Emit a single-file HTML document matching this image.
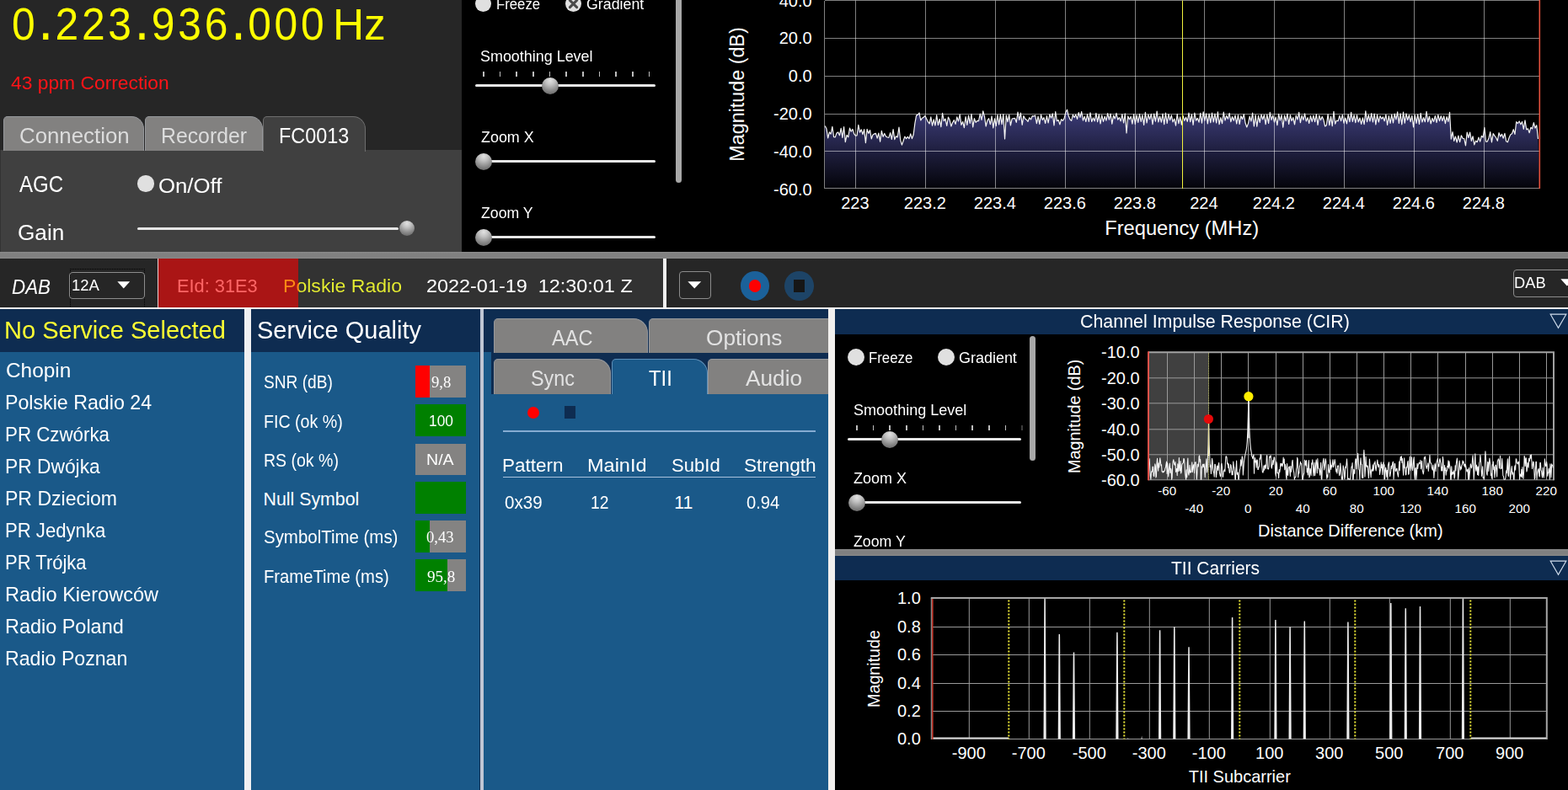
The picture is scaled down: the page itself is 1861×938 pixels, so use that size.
<!DOCTYPE html>
<html lang="en"><head><meta charset="utf-8"><title>DAB Receiver</title>
<style>
html,body{margin:0;padding:0;background:#000;}
body{width:1861px;height:938px;overflow:hidden;font-family:"Liberation Sans",sans-serif;}
#app{position:relative;width:1861px;height:938px;overflow:hidden;background:#000;}
#app div,#app svg{position:absolute;box-sizing:border-box;}
.t{white-space:pre;line-height:1;transform-origin:0 0;}
.thumb{border-radius:50%;background:radial-gradient(circle at 50% 18%,#e2e2e2 0%,#c2c2c2 28%,#8c8c8c 62%,#585858 100%);}
.radio{border-radius:50%;background:#e0e0e0;}
.track{background:#e6e6e6;height:3px;border-radius:1.5px;}
.tab{background:#828180;border:1px solid #96989c;border-bottom:none;border-radius:5px 15px 0 0;}

</style></head>
<body>
<div id="app">
<div style="left:0px;top:0px;width:548px;height:299px;background:#262626;"></div>
<div style="left:0px;top:178px;width:548px;height:121px;background:#404040;border-left:1px solid #333;"></div>
<div class="t" style="left:14.34px;top:0.73px;font-size:54px;color:#ffff00;letter-spacing:4.03px;transform:scaleX(0.922);">0<span style="font-size:70px;line-height:0;margin-left:-0.18px;letter-spacing:2.54px;">.</span>223<span style="font-size:70px;line-height:0;margin-left:-0.18px;letter-spacing:2.54px;">.</span>936<span style="font-size:70px;line-height:0;margin-left:-0.18px;letter-spacing:2.54px;">.</span>000</div>
<div class="t" style="left:394.88px;top:3.01px;font-size:52.49px;color:#ffff00;transform:scaleX(0.9793);">Hz</div>
<div class="t" style="left:12.84px;top:88.42px;font-size:22.48px;color:#ff1418;transform:scaleX(1.0158);">43 ppm Correction</div>
<div class="tab" style="left:4px;top:138px;width:167px;height:40.5px;"></div>
<div class="tab" style="left:172px;top:138px;width:139.5px;height:40.5px;"></div>
<div class="tab" style="left:312px;top:138px;width:122px;height:42px;background:#404040;border-color:#6e6e6e;"></div>
<div class="t" style="left:22.79px;top:148.41px;font-size:26.03px;color:#dcdcdc;transform:scaleX(0.9922);">Connection</div>
<div class="t" style="left:190.56px;top:148.41px;font-size:26.03px;color:#dcdcdc;transform:scaleX(0.9533);">Recorder</div>
<div class="t" style="left:330.77px;top:148.41px;font-size:26.03px;color:#ffffff;transform:scaleX(0.8982);">FC0013</div>
<div class="t" style="left:22.60px;top:205.33px;font-size:27.31px;color:#fff;transform:scaleX(0.8809);">AGC</div>
<div class="radio" style="left:163.2px;top:208px;width:19.5px;height:19.5px;"></div>
<div class="t" style="left:187.79px;top:208.61px;font-size:24.61px;color:#fff;transform:scaleX(1.0469);">On/Off</div>
<div class="t" style="left:21.37px;top:263.05px;font-size:26.46px;color:#fff;transform:scaleX(0.9894);">Gain</div>
<div class="track" style="left:163px;top:270px;width:310px;"></div>
<div class="thumb" style="left:473.7px;top:262.3px;width:18px;height:18px;"></div>
<div class="radio" style="left:564px;top:-5px;width:19px;height:19px;"></div>
<div class="t" style="left:588.59px;top:-4.21px;font-size:18.49px;color:#fff;transform:scaleX(0.9051);">Freeze</div>
<div class="radio" style="left:670.5px;top:-5px;width:19px;height:19px;"></div>
<svg style="left:670.5px;top:-5px;" width="19" height="19" viewBox="0 0 19 19"><path d="M5.4 5.4 L13.6 13.6 M13.6 5.4 L5.4 13.6" stroke="#4a4a4a" stroke-width="3" stroke-linecap="round" fill="none"/></svg>
<div class="t" style="left:695.57px;top:-4.21px;font-size:18.49px;color:#fff;transform:scaleX(0.9627);">Gradient</div>
<div style="left:802px;top:-6px;width:7px;height:222.5px;background:#a8a8a8;border-radius:3.5px;"></div>
<div class="t" style="left:570.04px;top:57.55px;font-size:18.78px;color:#fff;transform:scaleX(0.9553);">Smoothing Level</div>
<div style="left:573.0px;top:85.3px;width:1.6px;height:5.8px;background:#bdbdbd;"></div>
<div style="left:592.67px;top:85.3px;width:1.6px;height:5.8px;background:#bdbdbd;"></div>
<div style="left:612.34px;top:85.3px;width:1.6px;height:5.8px;background:#bdbdbd;"></div>
<div style="left:632.01px;top:85.3px;width:1.6px;height:5.8px;background:#bdbdbd;"></div>
<div style="left:651.68px;top:85.3px;width:1.6px;height:5.8px;background:#bdbdbd;"></div>
<div style="left:671.35px;top:85.3px;width:1.6px;height:5.8px;background:#bdbdbd;"></div>
<div style="left:691.02px;top:85.3px;width:1.6px;height:5.8px;background:#bdbdbd;"></div>
<div style="left:710.69px;top:85.3px;width:1.6px;height:5.8px;background:#bdbdbd;"></div>
<div style="left:730.36px;top:85.3px;width:1.6px;height:5.8px;background:#bdbdbd;"></div>
<div style="left:750.03px;top:85.3px;width:1.6px;height:5.8px;background:#bdbdbd;"></div>
<div style="left:769.7px;top:85.3px;width:1.6px;height:5.8px;background:#bdbdbd;"></div>
<div class="track" style="left:564px;top:100px;width:214px;"></div>
<div class="thumb" style="left:642.8px;top:91.8px;width:20px;height:20px;"></div>
<div class="t" style="left:570.94px;top:153.55px;font-size:18.78px;color:#fff;transform:scaleX(0.9544);">Zoom X</div>
<div class="track" style="left:575px;top:190px;width:203px;"></div>
<div class="thumb" style="left:564.4px;top:181.8px;width:20px;height:20px;"></div>
<div class="t" style="left:570.95px;top:243.55px;font-size:18.78px;color:#fff;transform:scaleX(0.9421);">Zoom Y</div>
<div class="track" style="left:575px;top:280px;width:203px;"></div>
<div class="thumb" style="left:564.4px;top:271.7px;width:20px;height:20px;"></div>
<svg style="left:840px;top:0px;" width="1021" height="299" viewBox="840 0 1021 299" font-family='"Liberation Sans",sans-serif' fill="#fff"><defs><linearGradient id="sg" x1="0" y1="128" x2="0" y2="223.5" gradientUnits="userSpaceOnUse"><stop offset="0" stop-color="#3e3e7c"/><stop offset="1" stop-color="#04040a"/></linearGradient></defs><polygon points="979.0,223.5 979.25,149.5 980.97,153.0 982.69,163.9 984.41,156.9 986.13,159.1 987.85,150.4 989.57,162.7 991.29,162.9 993.01,158.0 994.73,156.9 996.45,160.8 998.17,152.3 999.89,163.3 1001.61,150.7 1003.33,168.6 1005.05,160.4 1006.77,162.8 1008.49,152.1 1010.21,156.2 1011.93,153.4 1013.65,158.9 1015.37,161.1 1017.09,161.0 1018.81,148.3 1020.53,157.2 1022.25,153.9 1023.97,159.7 1025.69,153.7 1027.41,169.6 1029.13,153.4 1030.85,158.4 1032.57,154.6 1034.29,164.8 1036.01,159.9 1037.73,158.9 1039.45,158.3 1041.17,164.2 1042.89,158.0 1044.61,168.1 1046.33,155.4 1048.05,162.4 1049.77,158.4 1051.49,162.0 1053.21,163.0 1054.93,163.4 1056.65,157.7 1058.37,165.5 1060.09,153.5 1061.81,165.6 1063.53,161.7 1065.25,162.9 1066.97,151.0 1068.69,166.4 1070.41,172.1 1072.13,167.3 1073.85,162.1 1075.57,164.7 1077.29,162.3 1079.01,164.6 1080.73,158.9 1082.45,164.6 1084.17,159.8 1085.89,146.4 1087.61,136.9 1089.33,136.4 1091.05,134.0 1092.77,142.8 1094.49,140.2 1096.21,139.4 1097.93,137.4 1099.65,141.0 1101.37,144.4 1103.09,146.9 1104.81,138.9 1106.53,149.2 1108.25,141.8 1109.97,149.0 1111.69,136.7 1113.41,148.5 1115.13,141.3 1116.85,150.7 1118.57,134.4 1120.29,143.7 1122.01,141.1 1123.73,149.3 1125.45,139.0 1127.17,142.6 1128.89,150.0 1130.61,145.5 1132.33,142.6 1134.05,147.4 1135.77,138.9 1137.49,144.0 1139.21,135.9 1140.93,148.3 1142.65,144.4 1144.37,151.7 1146.09,138.5 1147.81,148.4 1149.53,137.1 1151.25,146.5 1152.97,135.4 1154.69,151.0 1156.41,140.7 1158.13,145.4 1159.85,143.4 1161.57,143.7 1163.29,135.2 1165.01,142.3 1166.73,131.9 1168.45,138.1 1170.17,150.0 1171.89,143.0 1173.61,140.7 1175.33,147.7 1177.05,137.9 1178.77,151.9 1180.49,140.9 1182.21,149.7 1183.93,136.4 1185.65,147.9 1187.37,135.8 1189.09,147.7 1190.81,135.5 1192.53,165.0 1194.25,136.9 1195.97,144.7 1197.69,136.4 1199.41,148.9 1201.13,141.0 1202.85,140.7 1204.57,140.4 1206.29,145.3 1208.01,133.2 1209.73,142.3 1211.45,134.2 1213.17,148.3 1214.89,137.6 1216.61,141.1 1218.33,142.2 1220.05,144.3 1221.77,139.7 1223.49,141.9 1225.21,137.7 1226.93,138.1 1228.65,137.0 1230.37,146.7 1232.09,138.2 1233.81,147.4 1235.53,136.1 1237.25,142.3 1238.97,139.7 1240.69,146.5 1242.41,137.7 1244.13,146.0 1245.85,135.9 1247.57,140.1 1249.29,134.9 1251.01,148.9 1252.73,132.7 1254.45,143.7 1256.17,142.5 1257.89,147.9 1259.61,141.6 1261.33,143.4 1263.05,140.6 1264.77,133.6 1266.49,130.2 1268.21,137.5 1269.93,141.7 1271.65,143.4 1273.37,136.2 1275.09,139.5 1276.81,136.1 1278.53,141.4 1280.25,133.6 1281.97,139.4 1283.69,132.5 1285.41,143.0 1287.13,138.2 1288.85,144.5 1290.57,135.7 1292.29,144.4 1294.01,133.8 1295.73,144.5 1297.45,139.9 1299.17,143.8 1300.89,134.4 1302.61,144.7 1304.33,135.8 1306.05,146.9 1307.77,136.9 1309.49,144.3 1311.21,138.1 1312.93,143.1 1314.65,134.5 1316.37,142.1 1318.09,135.0 1319.81,147.1 1321.53,137.1 1323.25,140.9 1324.97,134.4 1326.69,142.1 1328.41,139.6 1330.13,143.8 1331.85,135.6 1333.57,146.0 1335.29,134.9 1337.01,158.0 1338.73,137.9 1340.45,141.8 1342.17,138.3 1343.89,147.2 1345.61,135.6 1347.33,147.4 1349.05,136.7 1350.77,145.3 1352.49,135.4 1354.21,144.3 1355.93,136.6 1357.65,148.4 1359.37,133.3 1361.09,145.8 1362.81,136.0 1364.53,141.6 1366.25,135.3 1367.97,147.6 1369.69,135.1 1371.41,144.2 1373.13,132.0 1374.85,144.9 1376.57,138.0 1378.29,145.2 1380.01,135.1 1381.73,147.7 1383.45,134.0 1385.17,146.5 1386.89,135.5 1388.61,142.6 1390.33,136.8 1392.05,144.8 1393.77,141.0 1395.49,149.1 1397.21,135.3 1398.93,146.6 1400.65,138.8 1402.37,148.2 1404.09,137.4 1405.81,143.3 1407.53,139.2 1409.25,144.3 1410.97,134.2 1412.69,144.7 1414.41,135.9 1416.13,148.3 1417.85,134.0 1419.57,143.1 1421.29,140.3 1423.01,145.1 1424.73,134.4 1426.45,146.1 1428.17,132.9 1429.89,143.2 1431.61,134.8 1433.33,146.8 1435.05,135.0 1436.77,145.7 1438.49,134.2 1440.21,144.8 1441.93,135.2 1443.65,145.9 1445.37,132.8 1447.09,147.6 1448.81,139.6 1450.53,146.7 1452.25,133.2 1453.97,143.0 1455.69,137.4 1457.41,141.2 1459.13,134.4 1460.85,144.6 1462.57,138.5 1464.29,143.2 1466.01,136.9 1467.73,146.9 1469.45,136.5 1471.17,147.4 1472.89,137.7 1474.61,141.5 1476.33,135.6 1478.05,146.0 1479.77,151.0 1481.49,146.6 1483.21,138.1 1484.93,144.0 1486.65,134.2 1488.37,150.0 1490.09,136.5 1491.81,150.2 1493.53,137.4 1495.25,145.3 1496.97,136.0 1498.69,141.8 1500.41,136.5 1502.13,147.7 1503.85,136.2 1505.57,146.3 1507.29,133.3 1509.01,142.3 1510.73,137.0 1512.45,145.1 1514.17,139.0 1515.89,148.6 1517.61,135.4 1519.33,143.0 1521.05,136.7 1522.77,151.2 1524.49,137.0 1526.21,143.7 1527.93,135.0 1529.65,147.3 1531.37,136.6 1533.09,143.5 1534.81,139.6 1536.53,147.9 1538.25,137.0 1539.97,142.0 1541.69,133.4 1543.41,145.6 1545.13,137.1 1546.85,142.4 1548.57,134.8 1550.29,144.0 1552.01,139.6 1553.73,146.5 1555.45,137.7 1557.17,144.3 1558.89,137.1 1560.61,144.6 1562.33,135.6 1564.05,148.5 1565.77,137.1 1567.49,142.6 1569.21,138.4 1570.93,142.3 1572.65,150.0 1574.37,148.7 1576.09,135.6 1577.81,148.7 1579.53,138.4 1581.25,149.6 1582.97,132.4 1584.69,147.1 1586.41,143.0 1588.13,143.7 1589.85,137.4 1591.57,143.7 1593.29,136.4 1595.01,146.2 1596.73,140.0 1598.45,146.8 1600.17,135.9 1601.89,144.7 1603.61,133.4 1605.33,144.4 1607.05,136.7 1608.77,145.6 1610.49,136.5 1612.21,144.8 1613.93,140.0 1615.65,147.4 1617.37,139.9 1619.09,147.7 1620.81,131.9 1622.53,144.7 1624.25,136.6 1625.97,144.0 1627.69,134.6 1629.41,145.0 1631.13,135.0 1632.85,147.9 1634.57,136.2 1636.29,145.0 1638.01,137.7 1639.73,141.1 1641.45,139.0 1643.17,143.7 1644.89,136.0 1646.61,148.5 1648.33,137.6 1650.05,146.4 1651.77,136.0 1653.49,145.8 1655.21,135.1 1656.93,141.8 1658.65,132.8 1660.37,146.3 1662.09,134.9 1663.81,147.8 1665.53,133.0 1667.25,146.2 1668.97,134.9 1670.69,142.5 1672.41,136.6 1674.13,144.6 1675.85,137.3 1677.57,150.9 1679.29,136.7 1681.01,146.3 1682.73,135.9 1684.45,147.5 1686.17,134.4 1687.89,145.0 1689.61,139.6 1691.33,144.7 1693.05,132.4 1694.77,144.7 1696.49,138.1 1698.21,146.8 1699.93,140.3 1701.65,144.4 1703.37,137.5 1705.09,145.5 1706.81,136.3 1708.53,143.7 1710.25,137.7 1711.97,143.5 1713.69,137.9 1715.41,146.6 1717.13,138.7 1718.85,144.3 1720.57,133.3 1722.29,165.2 1724.01,156.5 1725.73,167.4 1727.45,162.0 1729.17,169.0 1730.89,161.1 1732.61,168.7 1734.33,160.8 1736.05,164.3 1737.77,164.5 1739.49,172.9 1741.21,157.2 1742.93,163.5 1744.65,157.1 1746.37,167.3 1748.09,161.8 1749.81,171.9 1751.53,167.2 1753.25,168.7 1754.97,163.1 1756.69,168.1 1758.41,161.4 1760.13,163.1 1761.85,151.4 1763.57,168.1 1765.29,168.1 1767.01,164.0 1768.73,156.7 1770.45,168.8 1772.17,158.6 1773.89,161.2 1775.61,163.5 1777.33,167.3 1779.05,157.7 1780.77,162.1 1782.49,159.3 1784.21,164.2 1785.93,158.3 1787.65,167.8 1789.37,168.8 1791.09,163.6 1792.81,159.8 1794.53,158.8 1796.25,153.6 1797.97,159.4 1799.69,144.7 1801.41,146.5 1803.13,144.0 1804.85,147.8 1806.57,144.5 1808.29,153.4 1810.01,142.8 1811.73,153.8 1813.45,152.9 1815.17,157.7 1816.89,151.3 1818.61,152.9 1820.33,145.6 1822.05,152.1 1823.77,148.7 1825.49,165.0 1827.0,223.5" fill="url(#sg)"/><path d="M1015.5 0.5V223.5 M1098.5 0.5V223.5 M1181.5 0.5V223.5 M1264.5 0.5V223.5 M1347.5 0.5V223.5 M1429.5 0.5V223.5 M1512.5 0.5V223.5 M1595.5 0.5V223.5 M1678.5 0.5V223.5 M1761.5 0.5V223.5 M979.0 0.5H1827.0 M979.0 45.5H1827.0 M979.0 90.5H1827.0 M979.0 135.5H1827.0 M979.0 179.5H1827.0 M979.0 223.5H1827.0 M978.5 1V224.0" stroke="#fff" stroke-opacity="0.5" stroke-width="1" fill="none"/><polyline points="979.25,149.5 980.97,153.0 982.69,163.9 984.41,156.9 986.13,159.1 987.85,150.4 989.57,162.7 991.29,162.9 993.01,158.0 994.73,156.9 996.45,160.8 998.17,152.3 999.89,163.3 1001.61,150.7 1003.33,168.6 1005.05,160.4 1006.77,162.8 1008.49,152.1 1010.21,156.2 1011.93,153.4 1013.65,158.9 1015.37,161.1 1017.09,161.0 1018.81,148.3 1020.53,157.2 1022.25,153.9 1023.97,159.7 1025.69,153.7 1027.41,169.6 1029.13,153.4 1030.85,158.4 1032.57,154.6 1034.29,164.8 1036.01,159.9 1037.73,158.9 1039.45,158.3 1041.17,164.2 1042.89,158.0 1044.61,168.1 1046.33,155.4 1048.05,162.4 1049.77,158.4 1051.49,162.0 1053.21,163.0 1054.93,163.4 1056.65,157.7 1058.37,165.5 1060.09,153.5 1061.81,165.6 1063.53,161.7 1065.25,162.9 1066.97,151.0 1068.69,166.4 1070.41,172.1 1072.13,167.3 1073.85,162.1 1075.57,164.7 1077.29,162.3 1079.01,164.6 1080.73,158.9 1082.45,164.6 1084.17,159.8 1085.89,146.4 1087.61,136.9 1089.33,136.4 1091.05,134.0 1092.77,142.8 1094.49,140.2 1096.21,139.4 1097.93,137.4 1099.65,141.0 1101.37,144.4 1103.09,146.9 1104.81,138.9 1106.53,149.2 1108.25,141.8 1109.97,149.0 1111.69,136.7 1113.41,148.5 1115.13,141.3 1116.85,150.7 1118.57,134.4 1120.29,143.7 1122.01,141.1 1123.73,149.3 1125.45,139.0 1127.17,142.6 1128.89,150.0 1130.61,145.5 1132.33,142.6 1134.05,147.4 1135.77,138.9 1137.49,144.0 1139.21,135.9 1140.93,148.3 1142.65,144.4 1144.37,151.7 1146.09,138.5 1147.81,148.4 1149.53,137.1 1151.25,146.5 1152.97,135.4 1154.69,151.0 1156.41,140.7 1158.13,145.4 1159.85,143.4 1161.57,143.7 1163.29,135.2 1165.01,142.3 1166.73,131.9 1168.45,138.1 1170.17,150.0 1171.89,143.0 1173.61,140.7 1175.33,147.7 1177.05,137.9 1178.77,151.9 1180.49,140.9 1182.21,149.7 1183.93,136.4 1185.65,147.9 1187.37,135.8 1189.09,147.7 1190.81,135.5 1192.53,165.0 1194.25,136.9 1195.97,144.7 1197.69,136.4 1199.41,148.9 1201.13,141.0 1202.85,140.7 1204.57,140.4 1206.29,145.3 1208.01,133.2 1209.73,142.3 1211.45,134.2 1213.17,148.3 1214.89,137.6 1216.61,141.1 1218.33,142.2 1220.05,144.3 1221.77,139.7 1223.49,141.9 1225.21,137.7 1226.93,138.1 1228.65,137.0 1230.37,146.7 1232.09,138.2 1233.81,147.4 1235.53,136.1 1237.25,142.3 1238.97,139.7 1240.69,146.5 1242.41,137.7 1244.13,146.0 1245.85,135.9 1247.57,140.1 1249.29,134.9 1251.01,148.9 1252.73,132.7 1254.45,143.7 1256.17,142.5 1257.89,147.9 1259.61,141.6 1261.33,143.4 1263.05,140.6 1264.77,133.6 1266.49,130.2 1268.21,137.5 1269.93,141.7 1271.65,143.4 1273.37,136.2 1275.09,139.5 1276.81,136.1 1278.53,141.4 1280.25,133.6 1281.97,139.4 1283.69,132.5 1285.41,143.0 1287.13,138.2 1288.85,144.5 1290.57,135.7 1292.29,144.4 1294.01,133.8 1295.73,144.5 1297.45,139.9 1299.17,143.8 1300.89,134.4 1302.61,144.7 1304.33,135.8 1306.05,146.9 1307.77,136.9 1309.49,144.3 1311.21,138.1 1312.93,143.1 1314.65,134.5 1316.37,142.1 1318.09,135.0 1319.81,147.1 1321.53,137.1 1323.25,140.9 1324.97,134.4 1326.69,142.1 1328.41,139.6 1330.13,143.8 1331.85,135.6 1333.57,146.0 1335.29,134.9 1337.01,158.0 1338.73,137.9 1340.45,141.8 1342.17,138.3 1343.89,147.2 1345.61,135.6 1347.33,147.4 1349.05,136.7 1350.77,145.3 1352.49,135.4 1354.21,144.3 1355.93,136.6 1357.65,148.4 1359.37,133.3 1361.09,145.8 1362.81,136.0 1364.53,141.6 1366.25,135.3 1367.97,147.6 1369.69,135.1 1371.41,144.2 1373.13,132.0 1374.85,144.9 1376.57,138.0 1378.29,145.2 1380.01,135.1 1381.73,147.7 1383.45,134.0 1385.17,146.5 1386.89,135.5 1388.61,142.6 1390.33,136.8 1392.05,144.8 1393.77,141.0 1395.49,149.1 1397.21,135.3 1398.93,146.6 1400.65,138.8 1402.37,148.2 1404.09,137.4 1405.81,143.3 1407.53,139.2 1409.25,144.3 1410.97,134.2 1412.69,144.7 1414.41,135.9 1416.13,148.3 1417.85,134.0 1419.57,143.1 1421.29,140.3 1423.01,145.1 1424.73,134.4 1426.45,146.1 1428.17,132.9 1429.89,143.2 1431.61,134.8 1433.33,146.8 1435.05,135.0 1436.77,145.7 1438.49,134.2 1440.21,144.8 1441.93,135.2 1443.65,145.9 1445.37,132.8 1447.09,147.6 1448.81,139.6 1450.53,146.7 1452.25,133.2 1453.97,143.0 1455.69,137.4 1457.41,141.2 1459.13,134.4 1460.85,144.6 1462.57,138.5 1464.29,143.2 1466.01,136.9 1467.73,146.9 1469.45,136.5 1471.17,147.4 1472.89,137.7 1474.61,141.5 1476.33,135.6 1478.05,146.0 1479.77,151.0 1481.49,146.6 1483.21,138.1 1484.93,144.0 1486.65,134.2 1488.37,150.0 1490.09,136.5 1491.81,150.2 1493.53,137.4 1495.25,145.3 1496.97,136.0 1498.69,141.8 1500.41,136.5 1502.13,147.7 1503.85,136.2 1505.57,146.3 1507.29,133.3 1509.01,142.3 1510.73,137.0 1512.45,145.1 1514.17,139.0 1515.89,148.6 1517.61,135.4 1519.33,143.0 1521.05,136.7 1522.77,151.2 1524.49,137.0 1526.21,143.7 1527.93,135.0 1529.65,147.3 1531.37,136.6 1533.09,143.5 1534.81,139.6 1536.53,147.9 1538.25,137.0 1539.97,142.0 1541.69,133.4 1543.41,145.6 1545.13,137.1 1546.85,142.4 1548.57,134.8 1550.29,144.0 1552.01,139.6 1553.73,146.5 1555.45,137.7 1557.17,144.3 1558.89,137.1 1560.61,144.6 1562.33,135.6 1564.05,148.5 1565.77,137.1 1567.49,142.6 1569.21,138.4 1570.93,142.3 1572.65,150.0 1574.37,148.7 1576.09,135.6 1577.81,148.7 1579.53,138.4 1581.25,149.6 1582.97,132.4 1584.69,147.1 1586.41,143.0 1588.13,143.7 1589.85,137.4 1591.57,143.7 1593.29,136.4 1595.01,146.2 1596.73,140.0 1598.45,146.8 1600.17,135.9 1601.89,144.7 1603.61,133.4 1605.33,144.4 1607.05,136.7 1608.77,145.6 1610.49,136.5 1612.21,144.8 1613.93,140.0 1615.65,147.4 1617.37,139.9 1619.09,147.7 1620.81,131.9 1622.53,144.7 1624.25,136.6 1625.97,144.0 1627.69,134.6 1629.41,145.0 1631.13,135.0 1632.85,147.9 1634.57,136.2 1636.29,145.0 1638.01,137.7 1639.73,141.1 1641.45,139.0 1643.17,143.7 1644.89,136.0 1646.61,148.5 1648.33,137.6 1650.05,146.4 1651.77,136.0 1653.49,145.8 1655.21,135.1 1656.93,141.8 1658.65,132.8 1660.37,146.3 1662.09,134.9 1663.81,147.8 1665.53,133.0 1667.25,146.2 1668.97,134.9 1670.69,142.5 1672.41,136.6 1674.13,144.6 1675.85,137.3 1677.57,150.9 1679.29,136.7 1681.01,146.3 1682.73,135.9 1684.45,147.5 1686.17,134.4 1687.89,145.0 1689.61,139.6 1691.33,144.7 1693.05,132.4 1694.77,144.7 1696.49,138.1 1698.21,146.8 1699.93,140.3 1701.65,144.4 1703.37,137.5 1705.09,145.5 1706.81,136.3 1708.53,143.7 1710.25,137.7 1711.97,143.5 1713.69,137.9 1715.41,146.6 1717.13,138.7 1718.85,144.3 1720.57,133.3 1722.29,165.2 1724.01,156.5 1725.73,167.4 1727.45,162.0 1729.17,169.0 1730.89,161.1 1732.61,168.7 1734.33,160.8 1736.05,164.3 1737.77,164.5 1739.49,172.9 1741.21,157.2 1742.93,163.5 1744.65,157.1 1746.37,167.3 1748.09,161.8 1749.81,171.9 1751.53,167.2 1753.25,168.7 1754.97,163.1 1756.69,168.1 1758.41,161.4 1760.13,163.1 1761.85,151.4 1763.57,168.1 1765.29,168.1 1767.01,164.0 1768.73,156.7 1770.45,168.8 1772.17,158.6 1773.89,161.2 1775.61,163.5 1777.33,167.3 1779.05,157.7 1780.77,162.1 1782.49,159.3 1784.21,164.2 1785.93,158.3 1787.65,167.8 1789.37,168.8 1791.09,163.6 1792.81,159.8 1794.53,158.8 1796.25,153.6 1797.97,159.4 1799.69,144.7 1801.41,146.5 1803.13,144.0 1804.85,147.8 1806.57,144.5 1808.29,153.4 1810.01,142.8 1811.73,153.8 1813.45,152.9 1815.17,157.7 1816.89,151.3 1818.61,152.9 1820.33,145.6 1822.05,152.1 1823.77,148.7 1825.49,165.0" fill="none" stroke="#f4f4f4" stroke-width="1.2" stroke-linejoin="round"/><path d="M1403.5 0.5V224.0" stroke="#f2f23c" stroke-width="1"/><path d="M1827.3 0V224.0" stroke="#e2503c" stroke-width="1.6"/><text x="963.6" y="7.9" font-size="20" text-anchor="end">40.0</text><text x="963.6" y="52.2" font-size="20" text-anchor="end">20.0</text><text x="963.6" y="97.1" font-size="20" text-anchor="end">0.0</text><text x="963.6" y="142.1" font-size="20" text-anchor="end">-20.0</text><text x="963.6" y="186.7" font-size="20" text-anchor="end">-40.0</text><text x="963.6" y="231.7" font-size="20" text-anchor="end">-60.0</text><text x="1014.9" y="247.6" font-size="20" text-anchor="middle">223</text><text x="1097.9" y="247.6" font-size="20" text-anchor="middle">223.2</text><text x="1180.9" y="247.6" font-size="20" text-anchor="middle">223.4</text><text x="1263.9" y="247.6" font-size="20" text-anchor="middle">223.6</text><text x="1346.9" y="247.6" font-size="20" text-anchor="middle">223.8</text><text x="1428.9" y="247.6" font-size="20" text-anchor="middle">224</text><text x="1511.9" y="247.6" font-size="20" text-anchor="middle">224.2</text><text x="1594.9" y="247.6" font-size="20" text-anchor="middle">224.4</text><text x="1677.9" y="247.6" font-size="20" text-anchor="middle">224.6</text><text x="1760.9" y="247.6" font-size="20" text-anchor="middle">224.8</text><text x="1402.7" y="278.6" font-size="23.7" text-anchor="middle">Frequency (MHz)</text><text transform="translate(882.6 112) rotate(-90)" font-size="23.3" text-anchor="middle">Magnitude (dB)</text></svg>
<div style="left:0px;top:299px;width:1861px;height:8px;background:linear-gradient(#8a8a8a,#808080 30%,#808080 70%,#888);"></div>
<div style="left:0px;top:307px;width:1861px;height:58px;background:#262626;"></div>
<div style="left:354px;top:307px;width:433px;height:58px;background:#323232;"></div>
<div style="left:187px;top:307px;width:1px;height:58px;background:#ead2d2;"></div>
<div style="left:188px;top:307px;width:166px;height:58px;background:#aa1515;"></div>
<div class="t" style="left:13.55px;top:330.46px;font-size:23.61px;color:#fff;font-style:italic;transform:scaleX(0.9463);">DAB</div>
<div style="left:82.5px;top:319px;width:89.5px;height:46.5px;background:transparent;border:1px dotted #000;"></div>
<div style="left:82px;top:322.5px;width:90px;height:32px;background:transparent;border:1px solid #8c8c8c;border-radius:4px;"></div>
<div class="t" style="left:85.44px;top:329.68px;font-size:18.63px;color:#fff;transform:scaleX(0.9946);">12A</div>
<svg style="left:139px;top:333.6px;" width="16" height="9" viewBox="0 0 16 9"><path d="M0.3 0.3H15.2L7.75 8.6Z" fill="#fff"/></svg>
<div class="t" style="left:209.80px;top:328.18px;font-size:22.76px;color:#ff6666;transform:scaleX(0.9582);">EId: 31E3</div>
<div class="t" style="left:335.50px;top:328.18px;font-size:22.76px;color:#e6ee30;transform:scaleX(1.0142);background:linear-gradient(90deg,#ff8a14 0,#ff8a14 18.24px,#e6ee30 18.24px);-webkit-background-clip:text;background-clip:text;-webkit-text-fill-color:transparent;">Polskie Radio</div>
<div class="t" style="left:505.60px;top:328.18px;font-size:22.76px;color:#fff;transform:scaleX(1.0290);">2022-01-19  12:30:01 Z</div>
<div style="left:787px;top:307px;width:4px;height:58px;background:#f2f2f2;"></div>
<div style="left:806px;top:322px;width:38px;height:33px;background:transparent;border:1px solid #8c8c8c;border-radius:4px;"></div>
<svg style="left:816px;top:333.9px;" width="16.5" height="9" viewBox="0 0 16.5 9"><path d="M0.3 0.3H16.2L8.25 8.6Z" fill="#fff"/></svg>
<div style="left:878.8px;top:322px;width:34.6px;height:34.6px;background:#1b619a;border-radius:50%;"></div>
<div style="left:888.8px;top:332.0px;width:14.6px;height:14.6px;background:#ff0000;border-radius:50%;"></div>
<div style="left:931px;top:322px;width:34.6px;height:34.6px;background:#1d4467;border-radius:50%;"></div>
<div style="left:942px;top:332px;width:13px;height:14.7px;background:#161616;"></div>
<div style="left:1795.5px;top:320px;width:80px;height:32.6px;background:transparent;border:1px solid #8c8c8c;border-radius:4px;"></div>
<div class="t" style="left:1797.27px;top:326.55px;font-size:18.78px;color:#fff;transform:scaleX(0.9736);">DAB</div>
<svg style="left:1852px;top:330.6px;" width="16" height="9" viewBox="0 0 16 9"><path d="M0.3 0.3H15.2L7.75 8.6Z" fill="#fff"/></svg>
<div style="left:0px;top:365px;width:1861px;height:2px;background:#f4f4f4;"></div>
<div style="left:0px;top:367px;width:290px;height:51px;background:#0e2c51;"></div>
<div style="left:0px;top:418px;width:290px;height:520px;background:#1a5989;"></div>
<div class="t" style="left:4.63px;top:376.51px;font-size:29.45px;color:#ffff33;transform:scaleX(0.9857);">No Service Selected</div>
<div class="t" style="left:6.66px;top:428.10px;font-size:24.04px;color:#fff;transform:scaleX(1.0149);">Chopin</div>
<div class="t" style="left:5.99px;top:466.10px;font-size:24.04px;color:#fff;transform:scaleX(0.9650);">Polskie Radio 24</div>
<div class="t" style="left:6.06px;top:504.10px;font-size:24.04px;color:#fff;transform:scaleX(0.9283);">PR Czwórka</div>
<div class="t" style="left:6.02px;top:542.10px;font-size:24.04px;color:#fff;transform:scaleX(0.9482);">PR Dwójka</div>
<div class="t" style="left:6.00px;top:580.10px;font-size:24.04px;color:#fff;transform:scaleX(0.9580);">PR Dzieciom</div>
<div class="t" style="left:6.07px;top:618.10px;font-size:24.04px;color:#fff;transform:scaleX(0.9203);">PR Jedynka</div>
<div class="t" style="left:6.08px;top:656.10px;font-size:24.04px;color:#fff;transform:scaleX(0.9151);">PR Trójka</div>
<div class="t" style="left:5.96px;top:694.10px;font-size:24.04px;color:#fff;transform:scaleX(0.9808);">Radio Kierowców</div>
<div class="t" style="left:5.97px;top:732.10px;font-size:24.04px;color:#fff;transform:scaleX(0.9751);">Radio Poland</div>
<div class="t" style="left:5.99px;top:770.10px;font-size:24.04px;color:#fff;transform:scaleX(0.9628);">Radio Poznan</div>
<div style="left:290.4px;top:367px;width:7.8px;height:571px;background:#f0f0f2;"></div>
<div style="left:298px;top:367px;width:270.5px;height:51px;background:#0e2c51;"></div>
<div style="left:298px;top:418px;width:270.5px;height:520px;background:#1a5989;"></div>
<div style="left:568.5px;top:367px;width:1.5px;height:571px;background:#0e2c51;"></div>
<div style="left:570px;top:367px;width:4.2px;height:571px;background:#c0c6d4;"></div>
<div class="t" style="left:305.49px;top:376.51px;font-size:29.45px;color:#fff;transform:scaleX(0.9847);">Service Quality</div>
<div class="t" style="left:312.90px;top:444.38px;font-size:21.34px;color:#fff;transform:scaleX(0.8969);">SNR (dB)</div>
<div style="left:493px;top:434px;width:60px;height:37.5px;background:#848382;"></div>
<div style="left:493px;top:434px;width:17.2px;height:37.5px;background:#ff0000;"></div>
<div class="t" style="left:511.62px;top:444.08px;font-size:19.55px;color:#fff;font-family:'Liberation Serif', serif;transform:scaleX(0.9563);">9,8</div>
<div class="t" style="left:312.67px;top:491.38px;font-size:21.34px;color:#fff;transform:scaleX(0.9205);">FIC (ok %)</div>
<div style="left:493px;top:480.2px;width:60px;height:37.5px;background:#848382;"></div>
<div style="left:493px;top:480.2px;width:60px;height:37.5px;background:#008000;"></div>
<div class="t" style="left:508.81px;top:492.28px;font-size:17.92px;color:#fff;transform:scaleX(0.9706);">100</div>
<div class="t" style="left:312.68px;top:537.38px;font-size:21.34px;color:#fff;transform:scaleX(0.9147);">RS (ok %)</div>
<div style="left:493px;top:526.6px;width:60px;height:37.5px;background:#848382;"></div>
<div class="t" style="left:505.97px;top:538.28px;font-size:17.92px;color:#fff;transform:scaleX(1.0924);">N/A</div>
<div class="t" style="left:312.54px;top:583.38px;font-size:21.34px;color:#fff;">Null Symbol</div>
<div style="left:493px;top:572.3px;width:60px;height:37.5px;background:#848382;"></div>
<div style="left:493px;top:572.3px;width:60px;height:37.5px;background:#008000;"></div>
<div class="t" style="left:312.86px;top:628.38px;font-size:21.34px;color:#fff;transform:scaleX(0.9587);">SymbolTime (ms)</div>
<div style="left:493px;top:618.2px;width:60px;height:37.5px;background:#848382;"></div>
<div style="left:493px;top:618.2px;width:17.2px;height:37.5px;background:#008000;"></div>
<div class="t" style="left:506.42px;top:628.08px;font-size:19.55px;color:#fff;font-family:'Liberation Serif', serif;transform:scaleX(0.9548);">0,43</div>
<div class="t" style="left:312.62px;top:675.38px;font-size:21.34px;color:#fff;transform:scaleX(0.9487);">FrameTime (ms)</div>
<div style="left:493px;top:664.3px;width:60px;height:37.5px;background:#848382;"></div>
<div style="left:493px;top:664.3px;width:38.2px;height:37.5px;background:#008000;"></div>
<div class="t" style="left:506.60px;top:675.08px;font-size:19.55px;color:#fff;font-family:'Liberation Serif', serif;transform:scaleX(0.9761);">95,8</div>
<div style="left:574.2px;top:367px;width:409px;height:571px;background:#1a5989;"></div>
<div style="left:574.2px;top:367px;width:409px;height:51px;background:#0e2c51;"></div>
<div style="left:583px;top:418px;width:400.2px;height:49.5px;background:#0e2c51;"></div>
<div class="tab" style="left:585.5px;top:378px;width:183.5px;height:40.6px;border-radius:5px 17px 0 0;"></div>
<div class="tab" style="left:770px;top:378px;width:214.5px;height:40.6px;border-radius:5px 0 0 0;"></div>
<div class="tab" style="left:585.5px;top:426px;width:139.5px;height:41.5px;border-radius:5px 17px 0 0;"></div>
<div class="tab" style="left:725.5px;top:426px;width:114px;height:42px;border-radius:5px 17px 0 0;background:#1a5989;border-color:#5f8fb8;"></div>
<div class="tab" style="left:840px;top:426px;width:144.5px;height:41.5px;border-radius:5px 0 0 0;"></div>
<div class="t" style="left:654.80px;top:389.38px;font-size:24.89px;color:#e2e2e2;transform:scaleX(0.9480);">AAC</div>
<div class="t" style="left:837.67px;top:389.38px;font-size:24.89px;color:#e2e2e2;transform:scaleX(1.0545);">Options</div>
<div class="t" style="left:630.17px;top:437.38px;font-size:24.89px;color:#e2e2e2;transform:scaleX(0.9415);">Sync</div>
<div class="t" style="left:769.83px;top:437.38px;font-size:24.89px;color:#fff;transform:scaleX(0.9584);">TII</div>
<div class="t" style="left:885.10px;top:437.38px;font-size:24.89px;color:#e2e2e2;transform:scaleX(1.0535);">Audio</div>
<div style="left:626px;top:482.5px;width:14px;height:14px;background:#ff0000;border-radius:50%;"></div>
<div style="left:670.2px;top:482.2px;width:13.2px;height:14.4px;background:#0e2c51;"></div>
<div style="left:596.8px;top:511.4px;width:371.2px;height:1.6px;background:#86acd2;"></div>
<div style="left:596.8px;top:565.5px;width:371.2px;height:1.2px;background:#a9c1dc;"></div>
<div class="t" style="left:595.74px;top:541.90px;font-size:21.91px;color:#fff;transform:scaleX(1.0266);">Pattern</div>
<div class="t" style="left:696.86px;top:541.90px;font-size:21.91px;color:#fff;transform:scaleX(1.0729);">MainId</div>
<div class="t" style="left:796.51px;top:541.90px;font-size:21.91px;color:#fff;transform:scaleX(1.0083);">SubId</div>
<div class="t" style="left:883.49px;top:541.90px;font-size:21.91px;color:#fff;transform:scaleX(1.0345);">Strength</div>
<div class="t" style="left:599.26px;top:587.38px;font-size:21.34px;color:#fff;transform:scaleX(0.9633);">0x39</div>
<div class="t" style="left:701.49px;top:587.38px;font-size:21.34px;color:#fff;transform:scaleX(0.9054);">12</div>
<div class="t" style="left:800.17px;top:587.38px;font-size:21.34px;color:#fff;">11</div>
<div class="t" style="left:886.27px;top:587.38px;font-size:21.34px;color:#fff;transform:scaleX(0.9446);">0.94</div>
<div style="left:983.2px;top:367px;width:8px;height:571px;background:#f2f0ee;"></div>
<div style="left:991.2px;top:367px;width:870px;height:29.7px;background:#0e2c51;"></div>
<div class="t" style="left:1281.60px;top:371.03px;font-size:21.76px;color:#fff;transform:scaleX(0.9836);">Channel Impulse Response (CIR)</div>
<svg style="left:1839px;top:372.3px;" width="21" height="19" viewBox="0 0 21 19"><path d="M1.2 1.2H19.8L10.5 17.4Z" fill="none" stroke="#d0dceb" stroke-width="1.2"/></svg>
<div class="radio" style="left:1006px;top:414px;width:20px;height:20px;"></div>
<div class="t" style="left:1031.09px;top:415.79px;font-size:18.49px;color:#fff;transform:scaleX(0.9087);">Freeze</div>
<div class="radio" style="left:1112.7px;top:414px;width:20px;height:20px;"></div>
<div class="t" style="left:1137.76px;top:415.79px;font-size:18.49px;color:#fff;transform:scaleX(0.9713);">Gradient</div>
<div style="left:1222px;top:398.8px;width:7px;height:148px;background:#a8a8a8;border-radius:3.5px;"></div>
<div class="t" style="left:1013.04px;top:477.55px;font-size:18.78px;color:#fff;transform:scaleX(0.9611);">Smoothing Level</div>
<div style="left:1016.1px;top:505.0px;width:1.6px;height:5.8px;background:#bdbdbd;"></div>
<div style="left:1035.72px;top:505.0px;width:1.6px;height:5.8px;background:#bdbdbd;"></div>
<div style="left:1055.34px;top:505.0px;width:1.6px;height:5.8px;background:#bdbdbd;"></div>
<div style="left:1074.96px;top:505.0px;width:1.6px;height:5.8px;background:#bdbdbd;"></div>
<div style="left:1094.58px;top:505.0px;width:1.6px;height:5.8px;background:#bdbdbd;"></div>
<div style="left:1114.2px;top:505.0px;width:1.6px;height:5.8px;background:#bdbdbd;"></div>
<div style="left:1133.82px;top:505.0px;width:1.6px;height:5.8px;background:#bdbdbd;"></div>
<div style="left:1153.44px;top:505.0px;width:1.6px;height:5.8px;background:#bdbdbd;"></div>
<div style="left:1173.06px;top:505.0px;width:1.6px;height:5.8px;background:#bdbdbd;"></div>
<div style="left:1192.68px;top:505.0px;width:1.6px;height:5.8px;background:#bdbdbd;"></div>
<div style="left:1212.3px;top:505.0px;width:1.6px;height:5.8px;background:#3c3c3c;"></div>
<div class="track" style="left:1006px;top:520px;width:206.3px;"></div>
<div class="thumb" style="left:1045.7px;top:512.2px;width:20px;height:20px;"></div>
<div class="t" style="left:1013.04px;top:558.55px;font-size:18.78px;color:#fff;transform:scaleX(0.9591);">Zoom X</div>
<div class="track" style="left:1017px;top:595px;width:195.3px;"></div>
<div class="thumb" style="left:1006.5px;top:586.7px;width:20px;height:20px;"></div>
<div class="t" style="left:1013.05px;top:633.55px;font-size:18.78px;color:#fff;transform:scaleX(0.9452);">Zoom Y</div>
<svg style="left:1240px;top:396.7px;" width="621" height="255.3" viewBox="1240 396.7 621 255.3" font-family='"Liberation Sans",sans-serif' fill="#fff"><rect x="1363.0" y="418.0" width="71.5" height="151.5" fill="#404040"/><path d="M1385.5 418.0V569.5 M1417.5 418.0V569.5 M1449.5 418.0V569.5 M1481.5 418.0V569.5 M1514.5 418.0V569.5 M1546.5 418.0V569.5 M1578.5 418.0V569.5 M1610.5 418.0V569.5 M1642.5 418.0V569.5 M1674.5 418.0V569.5 M1706.5 418.0V569.5 M1739.5 418.0V569.5 M1771.5 418.0V569.5 M1803.5 418.0V569.5 M1835.5 418.0V569.5 M1363.0 448.5H1844.5 M1363.0 478.5H1844.5 M1363.0 509.5H1844.5 M1363.0 539.5H1844.5 M1363.0 569.5H1844.5" stroke="#9a9a9a" stroke-width="1" fill="none"/><path d="M1363.0 418.0H1845.0M1844.0 418.0V570.0" stroke="#a2a2a2" stroke-width="2" fill="none"/><path d="M1434.5 419.0V569.5" stroke="#f0f08c" stroke-width="1" stroke-dasharray="1 1"/><polyline points="1364.20,544.1 1364.75,555.6 1365.30,564.9 1365.85,569.0 1366.40,561.4 1366.95,559.2 1367.50,559.8 1368.05,553.7 1368.60,554.1 1369.15,564.6 1369.70,565.3 1370.25,559.7 1370.80,550.5 1371.35,552.8 1371.90,566.6 1372.45,565.2 1373.00,549.5 1373.55,543.9 1374.10,554.4 1374.65,558.9 1375.20,549.5 1375.75,554.7 1376.30,548.1 1376.85,543.4 1377.40,548.1 1377.95,552.7 1378.50,551.4 1379.05,559.6 1379.60,559.4 1380.15,560.8 1380.70,559.3 1381.25,560.2 1381.80,558.8 1382.35,558.8 1382.90,555.7 1383.45,554.6 1384.00,550.9 1384.55,547.7 1385.10,562.3 1385.65,549.5 1386.20,557.5 1386.75,565.7 1387.30,559.2 1387.85,553.4 1388.40,549.7 1388.95,561.3 1389.50,555.9 1390.05,557.7 1390.60,569.0 1391.15,566.7 1391.70,552.2 1392.25,547.5 1392.80,545.4 1393.35,549.1 1393.90,551.6 1394.45,551.9 1395.00,548.1 1395.55,560.1 1396.10,557.7 1396.65,556.1 1397.20,564.4 1397.75,550.4 1398.30,559.4 1398.85,553.8 1399.40,543.2 1399.95,558.9 1400.50,558.4 1401.05,547.2 1401.60,561.7 1402.15,560.1 1402.70,551.9 1403.25,550.3 1403.80,549.8 1404.35,549.4 1404.90,544.1 1405.45,544.8 1406.00,550.7 1406.55,561.1 1407.10,565.9 1407.65,569.0 1408.20,557.6 1408.75,566.5 1409.30,549.2 1409.85,543.7 1410.40,561.5 1410.95,563.8 1411.50,559.1 1412.05,552.1 1412.60,560.9 1413.15,559.4 1413.70,560.4 1414.25,556.2 1414.80,548.4 1415.35,560.4 1415.90,556.6 1416.45,552.0 1417.00,551.2 1417.55,561.5 1418.10,549.0 1418.65,548.9 1419.20,548.3 1419.75,556.7 1420.30,569.0 1420.85,562.2 1421.40,550.8 1421.95,554.1 1422.50,552.8 1423.05,541.7 1423.60,540.6 1424.15,548.4 1424.70,545.2 1425.25,569.0 1425.80,569.0 1426.35,553.6 1426.90,555.1 1427.45,551.0 1428.00,551.0 1428.55,554.2 1429.10,550.6 1429.65,556.3 1430.20,566.5 1430.75,556.7 1431.30,550.6 1431.85,544.4 1432.40,560.8 1432.95,558.6 1433.50,540.5 1434.05,527.5 1434.60,500.0 1435.15,527.5 1435.70,540.5 1436.25,554.1 1436.80,551.7 1437.35,562.3 1437.90,556.7 1438.45,544.1 1439.00,546.6 1439.55,555.4 1440.10,559.7 1440.65,560.7 1441.20,565.9 1441.75,551.0 1442.30,551.2 1442.85,556.6 1443.40,566.5 1443.95,562.6 1444.50,552.8 1445.05,553.8 1445.60,558.1 1446.15,551.2 1446.70,549.1 1447.25,560.1 1447.80,562.6 1448.35,565.4 1448.90,564.5 1449.45,551.1 1450.00,549.9 1450.55,554.5 1451.10,565.9 1451.65,565.9 1452.20,559.0 1452.75,558.8 1453.30,557.0 1453.85,559.6 1454.40,548.9 1454.95,541.6 1455.50,541.5 1456.05,542.9 1456.60,550.6 1457.15,549.5 1457.70,555.2 1458.25,550.4 1458.80,557.8 1459.35,561.3 1459.90,560.2 1460.45,551.3 1461.00,552.1 1461.55,556.0 1462.10,563.7 1462.65,559.6 1463.20,563.5 1463.75,547.7 1464.30,553.7 1464.85,554.8 1465.40,559.2 1465.95,569.0 1466.50,569.0 1467.05,555.8 1467.60,546.8 1468.15,562.6 1468.70,563.2 1469.25,560.6 1469.80,569.0 1470.35,569.0 1470.90,562.1 1471.45,557.6 1472.00,555.9 1472.55,545.4 1473.10,552.9 1473.65,549.7 1474.20,541.6 1474.75,542.9 1475.30,563.8 1475.85,557.8 1476.40,548.5 1476.95,544.9 1477.50,541.9 1478.05,538.6 1478.60,536.8 1479.15,533.8 1479.70,530.0 1480.25,523.2 1480.80,511.9 1481.35,492.3 1481.90,473.6 1482.45,493.5 1483.00,510.9 1483.55,522.4 1484.10,528.8 1484.65,533.9 1485.20,536.5 1485.75,541.5 1486.30,542.1 1486.85,544.3 1487.40,541.2 1487.95,539.6 1488.50,561.9 1489.05,548.7 1489.60,543.2 1490.15,548.6 1490.70,546.8 1491.25,554.9 1491.80,545.5 1492.35,546.1 1492.90,557.3 1493.45,557.1 1494.00,554.0 1494.55,553.7 1495.10,543.7 1495.65,545.0 1496.20,539.3 1496.75,540.0 1497.30,548.9 1497.85,554.5 1498.40,560.4 1498.95,560.9 1499.50,558.6 1500.05,552.5 1500.60,557.9 1501.15,552.9 1501.70,551.7 1502.25,556.1 1502.80,552.2 1503.35,540.5 1503.90,540.7 1504.45,556.1 1505.00,556.6 1505.55,556.7 1506.10,553.0 1506.65,541.7 1507.20,543.0 1507.75,541.0 1508.30,540.7 1508.85,553.9 1509.40,555.8 1509.95,551.9 1510.50,546.2 1511.05,551.4 1511.60,547.1 1512.15,542.5 1512.70,542.8 1513.25,550.1 1513.80,562.1 1514.35,565.2 1514.90,548.0 1515.45,550.6 1516.00,561.5 1516.55,560.8 1517.10,561.9 1517.65,567.4 1518.20,557.3 1518.75,560.5 1519.30,556.9 1519.85,549.9 1520.40,553.0 1520.95,550.1 1521.50,550.6 1522.05,553.7 1522.60,551.0 1523.15,542.7 1523.70,549.7 1524.25,544.8 1524.80,557.4 1525.35,551.0 1525.90,553.8 1526.45,565.1 1527.00,569.0 1527.55,550.3 1528.10,562.6 1528.65,564.2 1529.20,555.9 1529.75,554.0 1530.30,553.5 1530.85,559.4 1531.40,565.3 1531.95,553.3 1532.50,560.0 1533.05,554.3 1533.60,548.4 1534.15,545.9 1534.70,555.3 1535.25,558.5 1535.80,561.1 1536.35,569.0 1536.90,566.4 1537.45,566.5 1538.00,565.6 1538.55,556.9 1539.10,554.5 1539.65,543.0 1540.20,544.9 1540.75,566.5 1541.30,560.0 1541.85,561.7 1542.40,553.2 1542.95,551.9 1543.50,548.0 1544.05,550.3 1544.60,550.1 1545.15,561.3 1545.70,569.0 1546.25,569.0 1546.80,565.3 1547.35,562.9 1547.90,561.2 1548.45,545.8 1549.00,551.6 1549.55,547.1 1550.10,552.8 1550.65,546.3 1551.20,560.5 1551.75,556.0 1552.30,563.8 1552.85,552.0 1553.40,546.2 1553.95,566.6 1554.50,564.9 1555.05,555.9 1555.60,559.3 1556.15,564.2 1556.70,549.6 1557.25,550.8 1557.80,545.5 1558.35,553.2 1558.90,564.7 1559.45,559.0 1560.00,549.0 1560.55,564.4 1561.10,560.7 1561.65,550.3 1562.20,545.6 1562.75,550.5 1563.30,561.4 1563.85,544.2 1564.40,553.1 1564.95,556.0 1565.50,556.2 1566.05,559.3 1566.60,564.0 1567.15,557.6 1567.70,549.1 1568.25,568.0 1568.80,569.0 1569.35,555.7 1569.90,550.9 1570.45,546.5 1571.00,544.0 1571.55,557.7 1572.10,554.9 1572.65,549.4 1573.20,544.4 1573.75,547.4 1574.30,562.7 1574.85,568.1 1575.40,563.4 1575.95,566.3 1576.50,551.3 1577.05,557.3 1577.60,560.8 1578.15,560.3 1578.70,545.6 1579.25,551.6 1579.80,557.2 1580.35,552.2 1580.90,554.2 1581.45,549.1 1582.00,545.4 1582.55,554.4 1583.10,551.6 1583.65,549.2 1584.20,545.3 1584.75,549.2 1585.30,555.6 1585.85,560.0 1586.40,556.8 1586.95,561.8 1587.50,552.8 1588.05,553.1 1588.60,552.6 1589.15,560.1 1589.70,564.4 1590.25,562.0 1590.80,549.7 1591.35,555.8 1591.90,561.3 1592.45,569.0 1593.00,566.0 1593.55,569.0 1594.10,552.5 1594.65,555.0 1595.20,558.8 1595.75,568.5 1596.30,565.5 1596.85,553.7 1597.40,555.4 1597.95,550.6 1598.50,544.6 1599.05,552.0 1599.60,569.0 1600.15,568.8 1600.70,567.8 1601.25,568.6 1601.80,569.0 1602.35,569.0 1602.90,566.3 1603.45,560.7 1604.00,553.7 1604.55,554.6 1605.10,549.2 1605.65,569.0 1606.20,569.0 1606.75,557.0 1607.30,559.2 1607.85,562.3 1608.40,549.9 1608.95,544.4 1609.50,544.9 1610.05,556.4 1610.60,556.2 1611.15,546.0 1611.70,538.0 1612.25,546.0 1612.80,556.9 1613.35,558.1 1613.90,569.0 1614.45,551.3 1615.00,543.6 1615.55,551.0 1616.10,551.2 1616.65,566.9 1617.20,564.3 1617.75,567.3 1618.30,542.0 1618.85,534.0 1619.40,542.0 1619.95,565.8 1620.50,557.2 1621.05,542.0 1621.60,551.6 1622.15,554.4 1622.70,552.4 1623.25,553.4 1623.80,559.5 1624.35,567.4 1624.90,560.3 1625.45,544.7 1626.00,551.6 1626.55,560.6 1627.10,566.7 1627.65,558.7 1628.20,556.9 1628.75,559.0 1629.30,551.5 1629.85,558.9 1630.40,556.6 1630.95,549.4 1631.50,550.5 1632.05,547.5 1632.60,556.2 1633.15,558.6 1633.70,552.7 1634.25,551.1 1634.80,545.8 1635.35,550.6 1635.90,554.4 1636.45,551.3 1637.00,552.2 1637.55,563.2 1638.10,559.6 1638.65,556.3 1639.20,548.4 1639.75,555.2 1640.30,551.1 1640.85,563.3 1641.40,556.6 1641.95,548.4 1642.50,553.6 1643.05,551.5 1643.60,568.7 1644.15,559.1 1644.70,554.8 1645.25,559.2 1645.80,566.0 1646.35,558.0 1646.90,569.0 1647.45,552.5 1648.00,550.0 1648.55,548.4 1649.10,557.9 1649.65,565.5 1650.20,562.6 1650.75,559.1 1651.30,552.8 1651.85,556.2 1652.40,552.4 1652.95,548.8 1653.50,548.0 1654.05,568.7 1654.60,561.2 1655.15,550.1 1655.70,550.4 1656.25,559.1 1656.80,558.9 1657.35,556.6 1657.90,555.9 1658.45,560.8 1659.00,563.6 1659.55,565.9 1660.10,558.0 1660.65,547.8 1661.20,558.3 1661.75,546.6 1662.30,542.0 1662.85,546.1 1663.40,541.4 1663.95,549.1 1664.50,544.2 1665.05,555.0 1665.60,563.9 1666.15,551.6 1666.70,543.4 1667.25,555.4 1667.80,554.8 1668.35,563.6 1668.90,563.0 1669.45,554.0 1670.00,554.8 1670.55,549.1 1671.10,547.0 1671.65,563.0 1672.20,562.5 1672.75,551.9 1673.30,541.8 1673.85,554.3 1674.40,558.6 1674.95,548.9 1675.50,542.4 1676.05,556.1 1676.60,558.4 1677.15,554.0 1677.70,545.3 1678.25,542.4 1678.80,563.4 1679.35,569.0 1679.90,555.9 1680.45,554.9 1681.00,569.0 1681.55,561.9 1682.10,549.9 1682.65,556.1 1683.20,551.9 1683.75,551.4 1684.30,548.9 1684.85,549.9 1685.40,549.7 1685.95,546.1 1686.50,556.4 1687.05,552.8 1687.60,547.1 1688.15,557.5 1688.70,559.9 1689.25,562.7 1689.80,559.3 1690.35,542.7 1690.90,544.4 1691.45,541.7 1692.00,545.5 1692.55,553.2 1693.10,556.1 1693.65,553.3 1694.20,552.8 1694.75,549.5 1695.30,559.1 1695.85,554.1 1696.40,548.0 1696.95,540.0 1697.50,548.0 1698.05,549.9 1698.60,549.6 1699.15,554.4 1699.70,556.0 1700.25,557.8 1700.80,551.8 1701.35,557.4 1701.90,567.1 1702.45,558.8 1703.00,550.2 1703.55,553.1 1704.10,559.5 1704.65,549.8 1705.20,547.8 1705.75,546.3 1706.30,544.0 1706.85,553.4 1707.40,551.5 1707.95,553.9 1708.50,545.9 1709.05,544.3 1709.60,547.8 1710.15,550.1 1710.70,558.6 1711.25,554.2 1711.80,558.8 1712.35,542.1 1712.90,545.4 1713.45,569.0 1714.00,569.0 1714.55,552.2 1715.10,558.3 1715.65,555.3 1716.20,563.9 1716.75,558.5 1717.30,559.0 1717.85,552.9 1718.40,554.1 1718.95,546.5 1719.50,556.0 1720.05,547.5 1720.60,552.4 1721.15,554.7 1721.70,569.0 1722.25,569.0 1722.80,553.4 1723.35,563.5 1723.90,561.1 1724.45,560.4 1725.00,562.6 1725.55,558.5 1726.10,568.0 1726.65,565.5 1727.20,552.5 1727.75,558.6 1728.30,550.5 1728.85,546.6 1729.40,543.7 1729.95,552.9 1730.50,569.0 1731.05,564.8 1731.60,557.7 1732.15,546.7 1732.70,551.8 1733.25,558.0 1733.80,554.1 1734.35,556.6 1734.90,552.1 1735.45,551.6 1736.00,546.6 1736.55,549.4 1737.10,547.8 1737.65,552.7 1738.20,550.8 1738.75,554.4 1739.30,550.9 1739.85,553.2 1740.40,557.1 1740.95,559.7 1741.50,557.7 1742.05,557.1 1742.60,569.0 1743.15,555.2 1743.70,569.0 1744.25,562.2 1744.80,557.2 1745.35,550.5 1745.90,552.7 1746.45,555.5 1747.00,553.5 1747.55,544.6 1748.10,540.4 1748.65,552.5 1749.20,569.0 1749.75,562.0 1750.30,547.3 1750.85,538.4 1751.40,556.0 1751.95,559.0 1752.50,551.7 1753.05,554.8 1753.60,563.3 1754.15,553.7 1754.70,564.3 1755.25,557.8 1755.80,548.9 1756.35,548.0 1756.90,540.0 1757.45,544.7 1758.00,556.6 1758.55,565.2 1759.10,560.5 1759.65,553.6 1760.20,567.1 1760.75,566.2 1761.30,569.0 1761.85,564.8 1762.40,543.5 1762.95,535.5 1763.50,543.5 1764.05,554.8 1764.60,562.6 1765.15,564.0 1765.70,547.9 1766.25,548.7 1766.80,559.2 1767.35,549.4 1767.90,543.8 1768.45,548.5 1769.00,553.5 1769.55,564.4 1770.10,562.6 1770.65,568.0 1771.20,551.3 1771.75,552.6 1772.30,547.7 1772.85,557.5 1773.40,553.7 1773.95,566.8 1774.50,560.8 1775.05,551.8 1775.60,552.2 1776.15,558.7 1776.70,565.8 1777.25,547.8 1777.80,546.3 1778.35,544.5 1778.90,545.9 1779.45,555.8 1780.00,548.6 1780.55,540.9 1781.10,556.4 1781.65,555.4 1782.20,556.0 1782.75,544.2 1783.30,553.2 1783.85,564.5 1784.40,565.0 1784.95,569.0 1785.50,569.0 1786.05,569.0 1786.60,568.5 1787.15,565.4 1787.70,558.4 1788.25,561.4 1788.80,552.4 1789.35,544.6 1789.90,563.7 1790.45,565.3 1791.00,546.3 1791.55,541.5 1792.10,561.2 1792.65,569.0 1793.20,562.0 1793.75,558.1 1794.30,553.2 1794.85,563.0 1795.40,560.4 1795.95,561.7 1796.50,569.0 1797.05,569.0 1797.60,554.4 1798.15,552.4 1798.70,557.9 1799.25,544.4 1799.80,545.0 1800.35,549.4 1800.90,549.7 1801.45,550.7 1802.00,548.1 1802.55,547.8 1803.10,557.6 1803.65,569.0 1804.20,562.5 1804.75,564.7 1805.30,565.3 1805.85,557.0 1806.40,566.7 1806.95,554.2 1807.50,561.5 1808.05,568.1 1808.60,560.4 1809.15,541.0 1809.70,542.9 1810.25,553.2 1810.80,545.0 1811.35,543.5 1811.90,559.7 1812.45,558.0 1813.00,548.7 1813.55,551.8 1814.10,554.9 1814.65,544.1 1815.20,547.4 1815.75,544.7 1816.30,540.1 1816.85,543.8 1817.40,539.6 1817.95,548.8 1818.50,556.3 1819.05,553.5 1819.60,547.7 1820.15,548.5 1820.70,554.6 1821.25,568.6 1821.80,567.5 1822.35,558.6 1822.90,548.1 1823.45,548.1 1824.00,569.0 1824.55,562.5 1825.10,559.9 1825.65,557.3 1826.20,556.2 1826.75,564.6 1827.30,565.7 1827.85,549.3 1828.40,549.1 1828.95,558.0 1829.50,559.0 1830.05,564.2 1830.60,566.8 1831.15,555.0 1831.70,562.0 1832.25,567.0 1832.80,559.6 1833.35,544.4 1833.90,549.1 1834.45,553.2 1835.00,553.2 1835.55,547.9 1836.10,551.3 1836.65,565.0 1837.20,561.6 1837.75,561.0 1838.30,555.8 1838.85,559.9 1839.40,569.0 1839.95,550.6 1840.50,555.2 1841.05,566.6 1841.60,550.5 1842.15,552.1 1842.70,552.2 1843.25,555.0" fill="none" stroke="#f6f6f6" stroke-width="1.05" stroke-linejoin="round"/><path d="M1481.9 473V520" stroke="#fff" stroke-width="1.5"/><path d="M1434.5 500V541" stroke="#eadf96" stroke-width="1.3"/><path d="M1363.0 417.0V570.0" stroke="#e8524a" stroke-width="2"/><circle cx="1434.4" cy="497.2" r="5.6" fill="#e60a0a"/><circle cx="1481.9" cy="470.4" r="5.6" fill="#ffee00"/><text x="1352.6" y="424.8" font-size="20" text-anchor="end">-10.0</text><text x="1352.6" y="455.3" font-size="20" text-anchor="end">-20.0</text><text x="1352.6" y="485.3" font-size="20" text-anchor="end">-30.0</text><text x="1352.6" y="516.3" font-size="20" text-anchor="end">-40.0</text><text x="1352.6" y="546.3" font-size="20" text-anchor="end">-50.0</text><text x="1352.6" y="576.3" font-size="20" text-anchor="end">-60.0</text><text x="1385.2" y="588.2" font-size="15.2" text-anchor="middle">-60</text><text x="1417.2" y="609.0" font-size="15.2" text-anchor="middle">-40</text><text x="1449.2" y="588.2" font-size="15.2" text-anchor="middle">-20</text><text x="1481.2" y="609.0" font-size="15.2" text-anchor="middle">0</text><text x="1514.2" y="588.2" font-size="15.2" text-anchor="middle">20</text><text x="1546.2" y="609.0" font-size="15.2" text-anchor="middle">40</text><text x="1578.2" y="588.2" font-size="15.2" text-anchor="middle">60</text><text x="1610.2" y="609.0" font-size="15.2" text-anchor="middle">80</text><text x="1642.2" y="588.2" font-size="15.2" text-anchor="middle">100</text><text x="1674.2" y="609.0" font-size="15.2" text-anchor="middle">120</text><text x="1706.2" y="588.2" font-size="15.2" text-anchor="middle">140</text><text x="1739.2" y="609.0" font-size="15.2" text-anchor="middle">160</text><text x="1771.2" y="588.2" font-size="15.2" text-anchor="middle">180</text><text x="1803.2" y="609.0" font-size="15.2" text-anchor="middle">200</text><text x="1835.2" y="588.2" font-size="15.2" text-anchor="middle">220</text><text x="1602.8" y="636.7" font-size="20" text-anchor="middle">Distance Difference (km)</text><text transform="translate(1281.6 494) rotate(-90)" font-size="19.8" text-anchor="middle">Magnitude (dB)</text></svg>
<div style="left:991.2px;top:652px;width:870px;height:8px;background:linear-gradient(#8a8a8a,#808080 30%,#808080 70%,#888);"></div>
<div style="left:991.2px;top:660px;width:870px;height:29px;background:#0e2c51;"></div>
<div class="t" style="left:1389.67px;top:663.78px;font-size:22.05px;color:#fff;transform:scaleX(0.9532);">TII Carriers</div>
<svg style="left:1839px;top:665.2px;" width="21" height="19" viewBox="0 0 21 19"><path d="M1.2 1.2H19.8L10.5 17.4Z" fill="none" stroke="#d0dceb" stroke-width="1.2"/></svg>
<svg style="left:991.2px;top:689px;" width="869.8" height="249" viewBox="991.2 689 869.8 249" font-family='"Liberation Sans",sans-serif' fill="#fff"><path d="M1150.5 710.0V877.5 M1221.5 710.0V877.5 M1293.5 710.0V877.5 M1364.5 710.0V877.5 M1435.5 710.0V877.5 M1507.5 710.0V877.5 M1578.5 710.0V877.5 M1649.5 710.0V877.5 M1721.5 710.0V877.5 M1792.5 710.0V877.5 M1106.0 744.5H1836.5 M1106.0 777.5H1836.5 M1106.0 811.5H1836.5 M1106.0 844.5H1836.5 M1106.0 877.5H1836.5" stroke="#9a9a9a" stroke-width="1" fill="none"/><path d="M1105.0 710.0H1837.0M1836.0 710.0V878.0" stroke="#a6a6a6" stroke-width="2" fill="none"/><path d="M1105.5 710.0V878.0" stroke="#a6a6a6" stroke-width="1" fill="none"/><path d="M1107.0 876.3H1197.5M1746 876.3H1835.5" stroke="#d8d8d8" stroke-width="1.4"/><path d="M1197.5 712.5V877.5" stroke="#e8e436" stroke-width="2" stroke-dasharray="2 2"/><path d="M1334.5 712.5V877.5" stroke="#e8e436" stroke-width="2" stroke-dasharray="2 2"/><path d="M1471.5 712.5V877.5" stroke="#e8e436" stroke-width="2" stroke-dasharray="2 2"/><path d="M1608.5 712.5V877.5" stroke="#e8e436" stroke-width="2" stroke-dasharray="2 2"/><path d="M1745.5 712.5V877.5" stroke="#e8e436" stroke-width="2" stroke-dasharray="2 2"/><path d="M1238.7 877.5L1239.50 714.8L1239.60 710.8H1241.00L1241.10 714.8L1241.9 877.5Z M1255.9 877.5L1256.70 756.9L1256.80 752.9H1258.20L1258.30 756.9L1259.1 877.5Z M1273.1 877.5L1273.90 778.4L1274.00 774.4H1275.40L1275.50 778.4L1276.3 877.5Z M1324.5 877.5L1325.30 754.7L1325.40 750.7H1326.80L1326.90 754.7L1327.7 877.5Z M1375.2 877.5L1376.00 752.3L1376.10 748.3H1377.50L1377.60 752.3L1378.4 877.5Z M1392.4 877.5L1393.20 748.3L1393.30 744.3H1394.70L1394.80 748.3L1395.6 877.5Z M1409.6 877.5L1410.40 772.2L1410.50 768.2H1411.90L1412.00 772.2L1412.8 877.5Z M1461.2 877.5L1462.00 736.9L1462.10 732.9H1463.50L1463.60 736.9L1464.4 877.5Z M1512.5 877.5L1513.30 740.0L1513.40 736.0H1514.80L1514.90 740.0L1515.7 877.5Z M1529.7 877.5L1530.50 748.3L1530.60 744.3H1532.00L1532.10 748.3L1532.9 877.5Z M1546.9 877.5L1547.70 741.5L1547.80 737.5H1549.20L1549.30 741.5L1550.1 877.5Z M1598.5 877.5L1599.30 742.5L1599.40 738.5H1600.80L1600.90 742.5L1601.7 877.5Z M1649.4 877.5L1650.20 720.0L1650.30 716.0H1651.70L1651.80 720.0L1652.6 877.5Z M1666.9 877.5L1667.70 726.2L1667.80 722.2H1669.20L1669.30 726.2L1670.1 877.5Z M1684.1 877.5L1684.90 724.0L1685.00 720.0H1686.40L1686.50 724.0L1687.3 877.5Z M1735.0 877.5L1735.80 714.8L1735.90 710.8H1737.30L1737.40 714.8L1738.2 877.5Z" fill="#ececec"/><path d="M1354.6 877.5L1355.3 873.5L1356 877.5ZM1338.5 877.5L1339 875.5L1339.6 877.5Z" fill="#ccc"/><path d="M1107.0 711.0V878.0" stroke="#c0362a" stroke-width="1.6"/><text x="1093" y="717.0" font-size="20" text-anchor="end">1.0</text><text x="1093" y="751.5" font-size="20" text-anchor="end">0.8</text><text x="1093" y="784.5" font-size="20" text-anchor="end">0.6</text><text x="1093" y="818.5" font-size="20" text-anchor="end">0.4</text><text x="1093" y="851.5" font-size="20" text-anchor="end">0.2</text><text x="1093" y="884.5" font-size="20" text-anchor="end">0.0</text><text x="1150.0" y="901.2" font-size="20" text-anchor="middle">-900</text><text x="1221.0" y="901.2" font-size="20" text-anchor="middle">-700</text><text x="1293.0" y="901.2" font-size="20" text-anchor="middle">-500</text><text x="1364.0" y="901.2" font-size="20" text-anchor="middle">-300</text><text x="1435.0" y="901.2" font-size="20" text-anchor="middle">-100</text><text x="1507.0" y="901.2" font-size="20" text-anchor="middle">100</text><text x="1578.0" y="901.2" font-size="20" text-anchor="middle">300</text><text x="1649.0" y="901.2" font-size="20" text-anchor="middle">500</text><text x="1721.0" y="901.2" font-size="20" text-anchor="middle">700</text><text x="1792.0" y="901.2" font-size="20" text-anchor="middle">900</text><text x="1471.5" y="928.9" font-size="20" text-anchor="middle">TII Subcarrier</text><text transform="translate(1044.6 794) rotate(-90)" font-size="19.7" text-anchor="middle">Magnitude</text></svg>
</div>
</body></html>
